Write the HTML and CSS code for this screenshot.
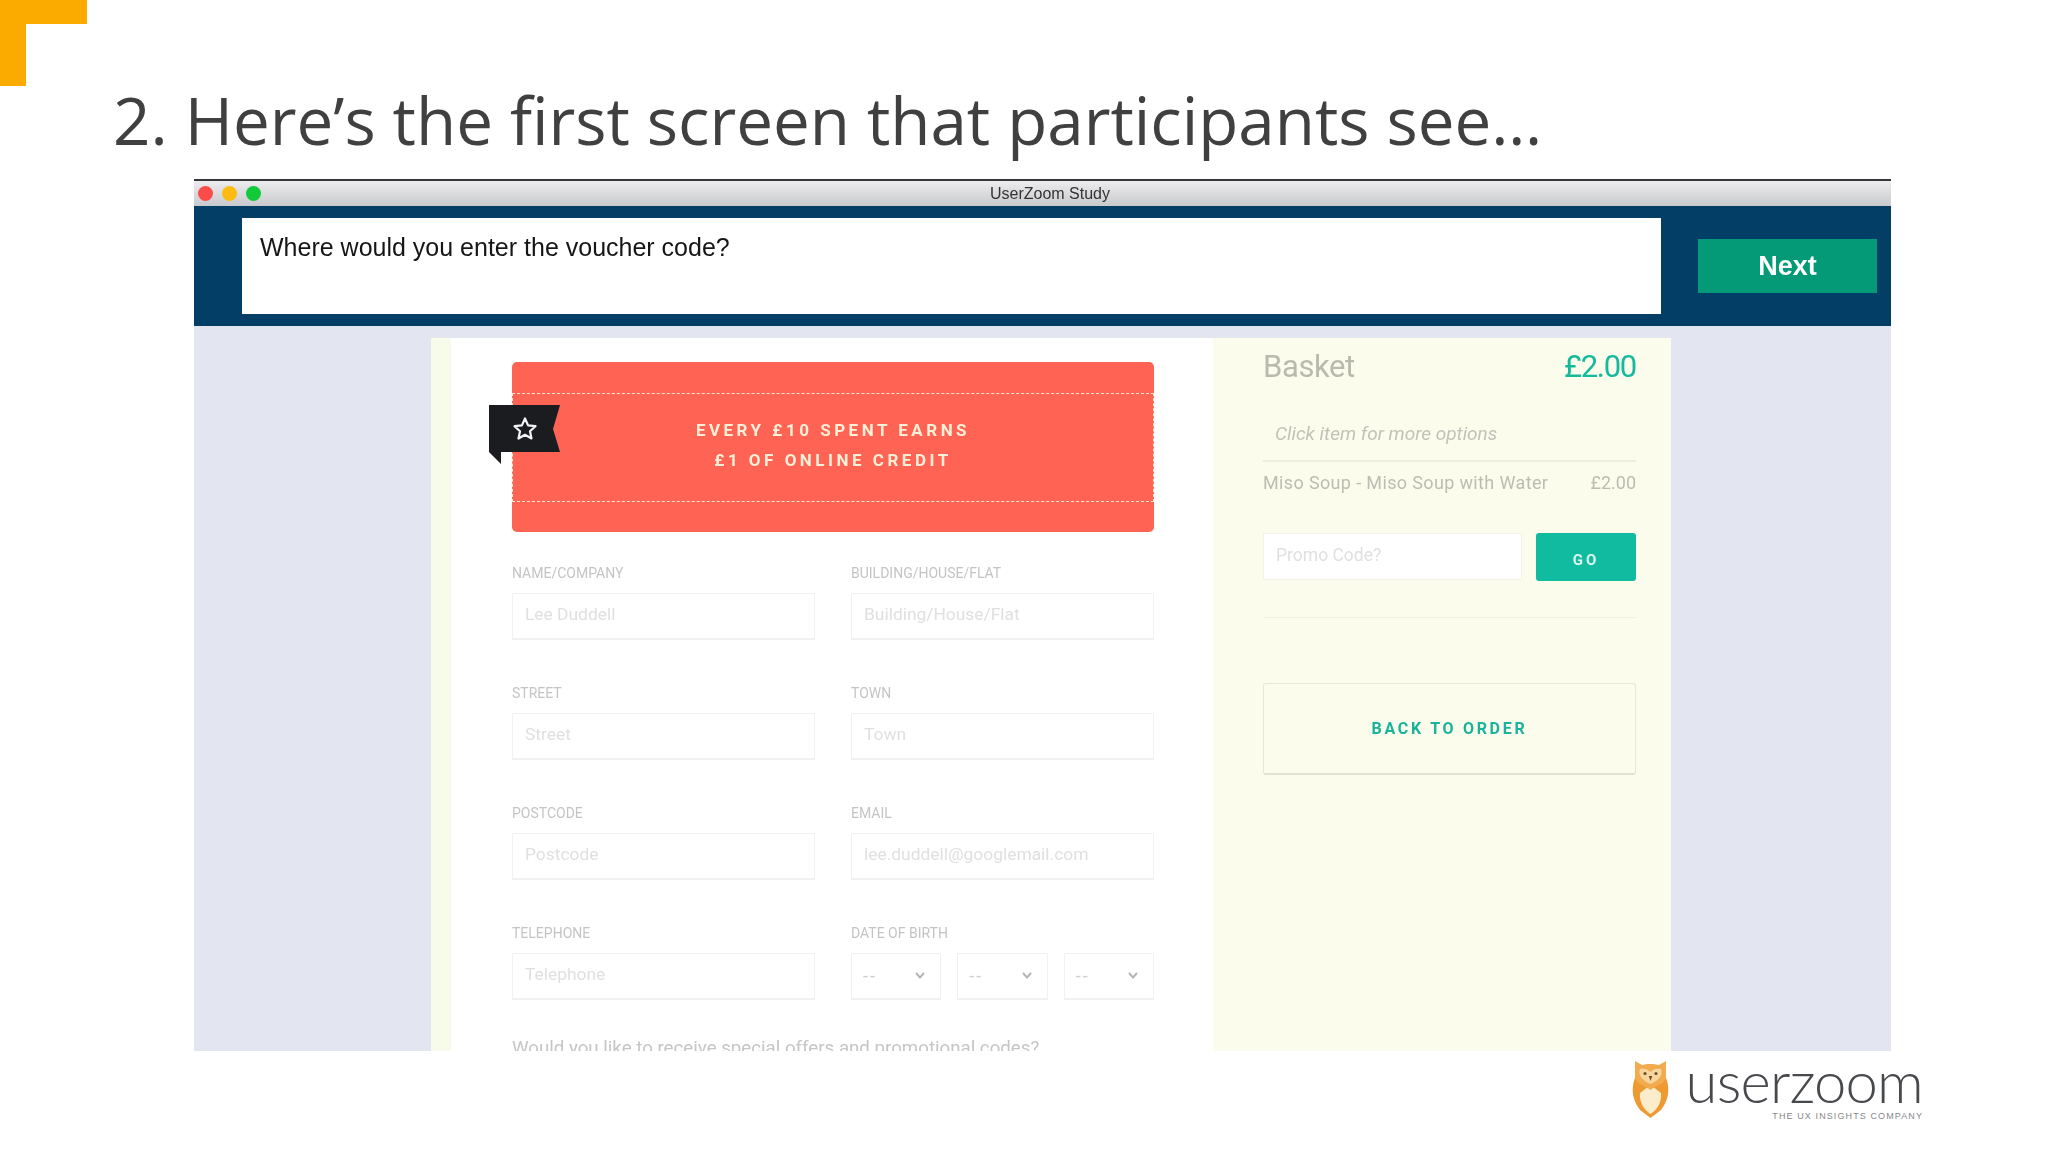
FILE: index.html
```html
<!DOCTYPE html>
<html lang="en">
<head>
<meta charset="utf-8">
<title>UserZoom Study</title>
<link rel="stylesheet" href="styles.css">
</head>
<body>
<div class="slide">
  <div class="corner"></div>
  <h1 class="title">2. Here’s the first screen that participants see…</h1>
  <div class="window">
    <div class="titlebar">
      <div class="dots"><span class="dot red"></span><span class="dot amber"></span><span class="dot green"></span></div>
      <div class="wintitle">UserZoom Study</div>
    </div>
    <div class="taskbar">
      <div class="question">Where would you enter the voucher code?</div>
      <div class="next">Next</div>
    </div>
    <div class="page">
      <div class="strip"></div>
      <div class="main">
        <div class="banner">
          <svg class="ribbon" viewBox="0 0 71 59" width="71" height="59">
            <path d="M0 0H71L64 24L71 47H12V59L0 47Z" fill="#1a1c20"/>
            <path d="M36 13.5L39.1 20.4L46.5 21.2L41 26.2L42.500 33.500L36 29.800L29.500 33.500L31 26.200L25.500 21.200L32.900 20.400Z" fill="none" stroke="#f4f4f4" stroke-width="2.200" stroke-linejoin="round"/>
          </svg>
          <div class="coupon">EVERY £10 SPENT EARNS<br>£1 OF ONLINE CREDIT</div>
        </div>
        <div class="form">
          <div class="field"><div class="label">NAME/COMPANY</div><div class="input">Lee Duddell</div></div>
          <div class="field"><div class="label">BUILDING/HOUSE/FLAT</div><div class="input">Building/House/Flat</div></div>
          <div class="field"><div class="label">STREET</div><div class="input">Street</div></div>
          <div class="field"><div class="label">TOWN</div><div class="input">Town</div></div>
          <div class="field"><div class="label">POSTCODE</div><div class="input">Postcode</div></div>
          <div class="field"><div class="label">EMAIL</div><div class="input">lee.duddell@googlemail.com</div></div>
          <div class="field"><div class="label">TELEPHONE</div><div class="input">Telephone</div></div>
          <div class="field"><div class="label">DATE OF BIRTH</div>
            <div class="selects">
              <div class="select"><span>--</span><svg class="chev" viewBox="0 0 10 7" width="10" height="7"><path d="M1 1L5 5.500L9 1" fill="none" stroke="#b5b5b5" stroke-width="2"/></svg></div>
              <div class="select"><span>--</span><svg class="chev" viewBox="0 0 10 7" width="10" height="7"><path d="M1 1L5 5.500L9 1" fill="none" stroke="#b5b5b5" stroke-width="2"/></svg></div>
              <div class="select"><span>--</span><svg class="chev" viewBox="0 0 10 7" width="10" height="7"><path d="M1 1L5 5.500L9 1" fill="none" stroke="#b5b5b5" stroke-width="2"/></svg></div>
            </div>
          </div>
        </div>
        <div class="offers">Would you like to receive special offers and promotional codes?</div>
      </div>
      <div class="basket">
        <div class="basket-head"><span class="basket-title">Basket</span><span class="basket-total">£2.00</span></div>
        <div class="note">Click item for more options</div>
        <div class="item"><span class="item-name">Miso Soup - Miso Soup with Water</span><span>£2.00</span></div>
        <div class="promo"><div class="promo-input">Promo Code?</div><div class="go">GO</div></div>
        <div class="rule"></div>
        <div class="back">BACK TO ORDER</div>
      </div>
    </div>
  </div>
  <div class="footer">
    <svg class="owl" viewBox="0 0 37 58" width="37" height="58">
      <path d="M3 18C-1 28 0 40 8 50L18.500 58L29 50C37 40 38 28 34 18Z" fill="#ee9a33"/>
      <path d="M18.500 25L8 33C7 42 12 50 18.500 54C25 50 30 42 29 33Z" fill="#fbeccb"/>
      <path d="M3 1L10 5C15 3.500 22 3.500 27 5L34 1L34 18C32 24 24 26 18.500 30C13 26 5 24 3 18Z" fill="#f2ab4e"/>
      <path d="M8 9C12 8 16 9 18.500 12C21 9 25 8 29 9C31 14 28 20 18.500 24C9 20 6 14 8 9Z" fill="#f8d59c"/>
      <circle cx="13" cy="13.500" r="1.600" fill="#6b5030"/>
      <circle cx="24" cy="13.500" r="1.600" fill="#6b5030"/>
      <path d="M16.800 16H20.200L18.500 21Z" fill="#6b4a25"/>
    </svg>
    <div class="brand">
      <div class="wordmark">userzoom</div>
      <div class="tagline">THE UX INSIGHTS COMPANY</div>
    </div>
  </div>
</div>
</body>
</html>
```

FILE: styles.css
```css
* { box-sizing: border-box; }
html, body { margin: 0; padding: 0; background: #fff; }
.slide { position: relative; width: 2048px; height: 1152px; overflow: hidden; background: #fff; display: flex; flex-direction: column; }
.corner { position: absolute; left: 0; top: 0; width: 87px; height: 86px; background: linear-gradient(#fbab00, #fbab00) 0 0 / 87px 24px no-repeat, linear-gradient(#fbab00, #fbab00) 0 0 / 26px 86px no-repeat; }
.title { margin: 0; height: 179px; flex: none; padding: 75px 0 0 113px; font: 400 65.5px/90px "Open Sans", "Noto Sans", sans-serif; color: #404040; white-space: nowrap; }
.window { flex: none; margin-left: 194px; width: 1697px; filter: blur(0.5px); font-family: Roboto, sans-serif; }
.titlebar { height: 27px; border-top: 2px solid #35363a; background: linear-gradient(#ececee, #c9cacd); display: flex; align-items: center; }
.dots { display: flex; gap: 9px; padding-left: 4px; }
.dot { width: 15px; height: 15px; border-radius: 50%; }
.red { background: #fb4c4a; }
.amber { background: #fbbb12; }
.green { background: #12c93a; }
.wintitle { flex: 1; padding-right: 52px; text-align: center; font: 400 16px/1 "Liberation Sans", sans-serif; color: #333; }
.taskbar { height: 120px; background: #023e66; display: flex; align-items: center; padding-left: 48px; }
.question { width: 1419px; height: 96px; background: #fff; padding: 14px 18px; font: 400 25px/30px "Liberation Sans", sans-serif; color: #161616; }
.next { width: 179px; height: 54px; margin-left: 37px; background: #049a78; color: #fff; display: flex; align-items: center; justify-content: center; font: 700 27px/1 "Liberation Sans", sans-serif; }
.page { height: 725px; padding: 12px 0 0 237px; background: #e3e6f1; display: flex; overflow: hidden; }
.strip { width: 20px; background: #f7fbe9; }
.main { width: 762px; padding: 24px 59px 0 61px; background: #fff; }
.banner { position: relative; height: 170px; padding: 31px 0 30px; border-radius: 5px; background: #ff6353; }
.ribbon { position: absolute; left: -23px; top: 43px; }
.coupon { height: 109px; padding-top: 21px; border: 1px dashed #fde6d0; text-align: center; font-weight: 700; font-size: 17px; line-height: 30px; letter-spacing: 3.500px; color: #fdefd8; }
.form { margin-top: 31px; display: grid; grid-template-columns: 303px 303px; column-gap: 36px; row-gap: 43px; }
.label { height: 20px; margin-bottom: 10px; font-size: 14px; line-height: 20px; color: #c4c4c4; white-space: nowrap; }
.input { height: 47px; padding-left: 12px; border: 1px solid #f1f1f1; border-bottom-width: 2px; font-size: 17.400px; line-height: 40px; color: #e0e0e0; white-space: nowrap; }
.selects { display: flex; gap: 16px; }
.select { flex: 1; height: 47px; padding: 0 15px 2px 11px; border: 1px solid #f1f1f1; border-bottom-width: 2px; display: flex; align-items: center; justify-content: space-between; font-size: 18px; letter-spacing: 2px; color: #cfcfcf; }
.offers { margin-top: 36px; font-size: 18.700px; line-height: 24px; color: #c6c6c6; white-space: nowrap; }
.basket { width: 458px; padding: 10px 35px 0 50px; background: #fbfcec; }
.basket-head { display: flex; justify-content: space-between; line-height: 38px; }
.basket-title { font-size: 31px; letter-spacing: -0.400px; color: #b9baae; }
.basket-total { font-size: 31px; letter-spacing: -1.300px; color: #17b99c; }
.note { margin-top: 33px; padding: 0 0 11px 12px; border-bottom: 2px solid #eeeee0; font-size: 19px; line-height: 30px; font-style: italic; color: #c2c3b8; }
.item { display: flex; justify-content: space-between; height: 44px; font-size: 18px; line-height: 42px; color: #bcbdb2; white-space: nowrap; }
.item-name { letter-spacing: 0.360px; }
.promo { margin-top: 27px; display: flex; justify-content: space-between; }
.promo-input { width: 259px; height: 47px; padding-left: 12px; background: #fff; border: 1px solid #f3f3ea; font-size: 17.500px; line-height: 43px; color: #e0e0e0; }
.go { width: 100px; height: 48px; border-radius: 3px; background: #10bba0; color: #dff6f0; font-weight: 700; font-size: 15px; line-height: 54px; letter-spacing: 3px; text-align: center; }
.rule { margin-top: 36px; height: 1px; background: #f0f0e4; }
.back { margin-top: 65px; height: 92px; padding-bottom: 1px; border: 1px solid #e7e7da; border-bottom: 2px solid #e2e2d6; border-radius: 3px; display: flex; align-items: center; justify-content: center; color: #17b39b; font-weight: 700; font-size: 16px; letter-spacing: 2.700px; }
.footer { display: flex; justify-content: flex-end; padding: 1px 125px 0 0; gap: 21px; }
.owl { display: block; margin-top: 8px; filter: blur(0.5px); }
.brand { display: flex; flex-direction: column; align-items: flex-end; width: 233px; }
.wordmark { font: 300 58px/58px Lato, sans-serif; letter-spacing: -0.800px; color: #47494d; white-space: nowrap; }
.tagline { margin-top: 1px; font: 400 9px/11px "Liberation Sans", sans-serif; letter-spacing: 1.100px; color: #85878a; white-space: nowrap; }
```
